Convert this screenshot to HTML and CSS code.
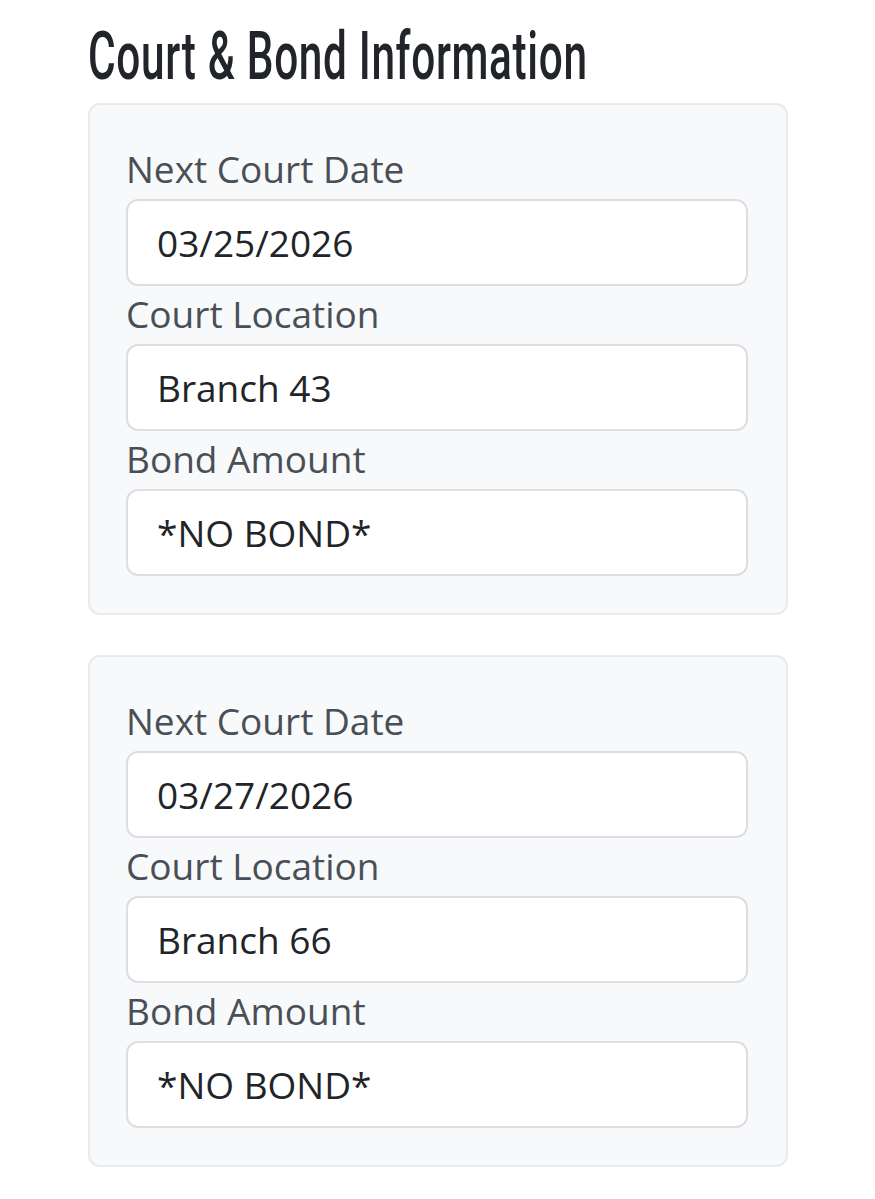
FILE: index.html
```html
<!DOCTYPE html>
<html>
<head>
<meta charset="utf-8">
<link rel="stylesheet" href="styles.css">
</head>
<body>
<div class="page">
  <h2 class="title"><span class="title-text">Court &amp; Bond Information</span></h2>
  <div class="cards">
    <div class="card">
      <label class="lbl">Next Court Date</label>
      <div class="field">03/25/2026</div>
      <label class="lbl">Court Location</label>
      <div class="field">Branch 43</div>
      <label class="lbl">Bond Amount</label>
      <div class="field">*NO BOND*</div>
    </div>
    <div class="card">
      <label class="lbl">Next Court Date</label>
      <div class="field">03/27/2026</div>
      <label class="lbl">Court Location</label>
      <div class="field">Branch 66</div>
      <label class="lbl">Bond Amount</label>
      <div class="field">*NO BOND*</div>
    </div>
  </div>
</div>
</body>
</html>
```
FILE: styles.css
```css
html, body {
  margin: 0;
  padding: 0;
  background: #ffffff;
}
.page {
  padding: 24px 87px 0 88px;
}
.title {
  margin: 0 0 13px 0;
  font-family: Roboto, "DejaVu Sans", sans-serif;
  font-weight: 500;
  font-size: 66px;
  line-height: 66px;
  letter-spacing: 1px;
  color: #212529;
  white-space: nowrap;
}
.title-text {
  display: inline-block;
  transform: scaleX(0.642);
  transform-origin: left center;
}
.cards {
  display: flex;
  flex-direction: column;
  gap: 40px;
}
.card {
  background: #f8f9fa;
  border: 2px solid #e9eaec;
  border-radius: 12px;
  padding: 36px 38px 37px 36px;
  display: flex;
  flex-direction: column;
}
.lbl {
  display: block;
  font-family: "Open Sans", sans-serif;
  font-size: 37px;
  line-height: 56px;
  margin-bottom: 2px;
  color: #494f56;
}
.field {
  height: 83px;
  border: 2px solid #dcdee1;
  border-radius: 12px;
  background: #ffffff;
  padding: 0 29px;
  display: flex;
  align-items: center;
  font-family: "Open Sans", sans-serif;
  font-size: 37px;
  color: #212529;
}
```
